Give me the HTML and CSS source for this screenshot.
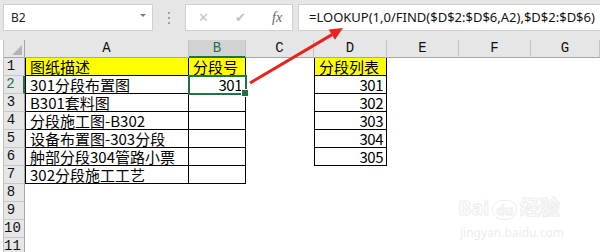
FILE: index.html
```html
<!DOCTYPE html>
<html lang="zh-CN">
<head>
  <meta charset="UTF-8" />
  <title>LOOKUP FIND</title>
  <link rel="stylesheet" href="styles.css">
</head>
<body>
  <div class="toolbar">
    <div class="namebox">
      <span>B2</span>
      <span class="caret"></span>
    </div>
    <div class="dots"><i></i><i></i><i></i></div>
    <div class="btnbox">
      <span class="btn x">&#x2715;</span>
      <span class="btn ok">&#x2714;</span>
      <span class="btn fx">fx</span>
    </div>
    <div class="formula">=LOOKUP(1,0/FIND($D$2:$D$6,A2),$D$2:$D$6)</div>
  </div>

  <div class="sheet">
    <div class="hd corner"><span class="tri"></span></div>
    <div class="hd">A</div>
    <div class="hd sel">B</div>
    <div class="hd">C</div>
    <div class="hd">D</div>
    <div class="hd">E</div>
    <div class="hd">F</div>
    <div class="hd">G</div>

    <div class="rh">1</div>
    <div class="c ta yel">图纸描述</div>
    <div class="c tb yel">分段号</div>
    <div class="c"></div>
    <div class="c td yel">分段列表</div>
    <div class="c"></div><div class="c"></div><div class="c"></div>

    <div class="rh rsel">2</div>
    <div class="c ta">301分段布置图</div>
    <div class="c tb num active">301</div>
    <div class="c"></div>
    <div class="c td num">301</div>
    <div class="c"></div><div class="c"></div><div class="c"></div>

    <div class="rh">3</div>
    <div class="c ta">B301套料图</div>
    <div class="c tb"></div>
    <div class="c"></div>
    <div class="c td num">302</div>
    <div class="c"></div><div class="c"></div><div class="c"></div>

    <div class="rh">4</div>
    <div class="c ta">分段施工图-B302</div>
    <div class="c tb"></div>
    <div class="c"></div>
    <div class="c td num">303</div>
    <div class="c"></div><div class="c"></div><div class="c"></div>

    <div class="rh">5</div>
    <div class="c ta">设备布置图-303分段</div>
    <div class="c tb"></div>
    <div class="c"></div>
    <div class="c td num">304</div>
    <div class="c"></div><div class="c"></div><div class="c"></div>

    <div class="rh">6</div>
    <div class="c ta">舯部分段304管路小票</div>
    <div class="c tb"></div>
    <div class="c"></div>
    <div class="c td num">305</div>
    <div class="c"></div><div class="c"></div><div class="c"></div>

    <div class="rh">7</div>
    <div class="c ta">302分段施工工艺</div>
    <div class="c tb"></div>
    <div class="c"></div><div class="c"></div><div class="c"></div><div class="c"></div><div class="c"></div>

    <div class="rh">8</div>
    <div class="c"></div><div class="c"></div><div class="c"></div><div class="c"></div><div class="c"></div><div class="c"></div><div class="c"></div>
    <div class="rh">9</div>
    <div class="c"></div><div class="c"></div><div class="c"></div><div class="c"></div><div class="c"></div><div class="c"></div><div class="c"></div>
    <div class="rh">10</div>
    <div class="c"></div><div class="c"></div><div class="c"></div><div class="c"></div><div class="c"></div><div class="c"></div><div class="c"></div>
    <div class="rh">11</div>
    <div class="c"></div><div class="c"></div><div class="c"></div><div class="c"></div><div class="c"></div><div class="c"></div><div class="c"></div>
  </div>

  <!-- annotation arrow drawn over the sheet -->
  <svg class="arrow" width="600" height="252" viewBox="0 0 600 252">
    <line x1="250" y1="83" x2="332" y2="34.6" stroke="#e8231d" stroke-width="3" />
    <polygon points="343,28 334.9,39.8 328.7,29.4" fill="#e8231d" />
  </svg>

  <div class="watermark">
    <div class="wm-top">Bai<span class="paw">du</span>经验</div>
    <div class="wm-url">jingyan.baidu.com</div>
  </div>
</body>
</html>
```

FILE: styles.css
```css
* {
  box-sizing: border-box;
}
body {
  margin: 0;
  width: 600px;
  height: 252px;
  overflow: hidden;
  background-color: #fff;
  font-family: "Noto Sans CJK SC", sans-serif;
  position: relative;
}

/* formula bar */
.toolbar {
  height: 40px;
  background-color: #e6e6e6;
  display: flex;
  align-items: flex-start;
  padding: 4px 0 0 3px;
}
.namebox {
  width: 150px;
  height: 27px;
  background-color: #fff;
  border: 1px solid #d0d0d0;
  display: flex;
  align-items: center;
  justify-content: space-between;
  padding: 0 6px 0 7px;
  font-family: "Noto Sans", sans-serif;
  font-size: 12px;
  color: #222;
}
.caret {
  width: 0;
  height: 0;
  border-left: 3px solid transparent;
  border-right: 3px solid transparent;
  border-top: 3px solid #7a7a7a;
  margin-top: -4px;
}
.dots {
  width: 32px;
  height: 27px;
  display: flex;
  flex-direction: column;
  align-items: center;
  justify-content: center;
  gap: 3px;
}
.dots i {
  width: 2px;
  height: 2px;
  background-color: #a0a0a0;
}
.btnbox {
  width: 108px;
  height: 27px;
  background-color: #fff;
  border: 1px solid #d0d0d0;
  display: flex;
  align-items: center;
  padding-left: 12px;
}
.btn {
  color: #c4c4c4;
  font-size: 13px;
  font-family: "DejaVu Sans", sans-serif;
}
.btn.x {
  width: 37px;
}
.btn.ok {
  width: 37px;
}
.btn.fx {
  font-family: "Liberation Serif", serif;
  font-style: italic;
  color: #666;
  font-size: 14px;
}
.formula {
  flex: 1;
  margin-left: 5px;
  height: 27px;
  background-color: #fff;
  border: 1px solid #d0d0d0;
  border-right: none;
  padding-left: 10px;
  font-family: "Noto Sans", sans-serif;
  font-size: 13px;
  line-height: 25px;
  color: #111;
  white-space: nowrap;
}

/* grid */
.sheet {
  display: grid;
  grid-template-columns: 22px 164px 57px 68px 73px 72px 72px 1fr;
  grid-auto-rows: 18px;
  padding-left: 3px;
}
.hd {
  background-color: #e6e6e6;
  border-right: 1px solid #c4c4c4;
  border-bottom: 1px solid #a6a6a6;
  font-family: "Liberation Mono", monospace;
  font-size: 14px;
  line-height: 17px;
  text-align: center;
  color: #111;
}
.hd.sel {
  background-color: #d2d2d2;
  color: #217346;
  border-bottom: 2px solid #217346;
}
.corner {
  display: flex;
  align-items: flex-end;
  justify-content: flex-end;
  padding: 0 2px 2px 0;
  border-left: 1px solid #c4c4c4;
  border-right-color: #a6a6a6;
}
.tri {
  width: 0;
  height: 0;
  border-left: 10px solid transparent;
  border-bottom: 10px solid #b4b4b4;
}
.rh {
  background-color: #e6e6e6;
  border-left: 1px solid #c4c4c4;
  border-right: 1px solid #a6a6a6;
  border-bottom: 1px solid #c8c8c8;
  font-family: "Liberation Mono", monospace;
  font-size: 14px;
  line-height: 17px;
  text-align: center;
  padding-right: 6px;
  color: #111;
  white-space: nowrap;
}
.rh.rsel {
  color: #217346;
  border-right: 2px solid #217346;
}
.c {
  font-size: 15px;
  line-height: 17px;
  color: #000;
  white-space: nowrap;
  padding: 0 3px 0 4px;
}
.ta {
  border-left: 1px solid #000;
  border-right: 1px solid #000;
  border-bottom: 1px solid #000;
}
.tb {
  border-right: 1px solid #000;
  border-bottom: 1px solid #000;
}
.td {
  border-left: 1px solid #000;
  border-right: 1px solid #000;
  border-bottom: 1px solid #000;
}
.yel {
  background-color: #ffff00;
}
.num {
  text-align: right;
  letter-spacing: -0.5px;
}
.active {
  position: relative;
  outline: 2px solid #217346;
  outline-offset: -1px;
}
.active::after {
  content: "";
  position: absolute;
  right: -4px;
  bottom: -4px;
  width: 6px;
  height: 6px;
  background-color: #217346;
  border: 1px solid #fff;
}

.arrow {
  position: absolute;
  left: 0;
  top: 0;
  pointer-events: none;
}

.watermark {
  position: absolute;
  left: 458px;
  top: 196px;
  color: #fff;
  -webkit-text-stroke: 1px #ededed;
  font-family: "Noto Sans", "Noto Sans CJK SC", sans-serif;
}
.wm-top {
  font-size: 20px;
  font-weight: bold;
  line-height: 24px;
}
.paw {
  font-size: 13px;
  border: 1px solid #ededed;
  border-radius: 10px 10px 12px 12px;
  padding: 0 3px;
  margin: 0 3px;
}
.wm-url {
  font-size: 12px;
  line-height: 22px;
  padding-left: 2px;
  -webkit-text-stroke: 0;
  color: #ececec;
}
```
